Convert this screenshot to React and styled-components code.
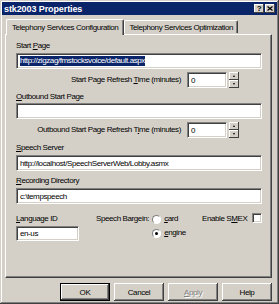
import React from 'react'
import styled, { createGlobalStyle } from 'styled-components'

const GlobalStyle = createGlobalStyle`
  html, body {
    margin: 0;
    padding: 0;
    background: #d4d0c8;
  }
  body {
    font-family: "Liberation Sans", Arial, sans-serif;
  }
`

export default function App() {
  return (
    <>
      <GlobalStyle />
      <Window>
        <TitleBar>
          <Title>stk2003 Properties</Title>
          <CaptionButtons>
            <CaptionButton>?</CaptionButton>
            <CaptionButton>
              <svg width="6" height="5" viewBox="0 0 6 5">
                <path d="M0.5 0.5 L5.5 4.5 M5.5 0.5 L0.5 4.5" stroke="#000" strokeWidth="1.2" />
              </svg>
            </CaptionButton>
          </CaptionButtons>
        </TitleBar>

        <Tabs>
          <Tab active>Telephony Services Configuration</Tab>
          <Tab>Telephony Services Optimization</Tab>
        </Tabs>

        <Panel>
          <Label>
            Start <U>P</U>age
          </Label>
          <Input>
            <Selected>http://zigzag/fmstocksvoice/default.aspx</Selected>
          </Input>

          <SpinRow>
            <Label>
              Start Page Refresh <U>T</U>ime (minutes)
            </Label>
            <SpinInput>0</SpinInput>
            <Spinner>
              <SpinHalf>
                <Arrow up />
              </SpinHalf>
              <SpinHalf>
                <Arrow />
              </SpinHalf>
            </Spinner>
          </SpinRow>

          <Label gap={4}>
            <U>O</U>utbound Start Page
          </Label>
          <Input gap={1} />

          <SpinRow>
            <Label>
              Outbound Start Page Refresh T<U>i</U>me (minutes)
            </Label>
            <SpinInput>0</SpinInput>
            <Spinner>
              <SpinHalf>
                <Arrow up />
              </SpinHalf>
              <SpinHalf>
                <Arrow />
              </SpinHalf>
            </Spinner>
          </SpinRow>

          <Label gap={5}>
            <U>S</U>peech Server
          </Label>
          <Input>http://localhost/SpeechServerWeb/Lobby.asmx</Input>

          <Label gap={5}>
            <U>R</U>ecording Directory
          </Label>
          <Input>c:\tempspeech</Input>

          <BottomRow>
            <Field>
              <Label>
                <U>L</U>anguage ID
              </Label>
              <ShortInput>en-us</ShortInput>
            </Field>
            <Bargein>
              <Label>Speech Bargein:</Label>
              <Radios>
                <RadioRow>
                  <Radio />
                  <Label>
                    <U>c</U>ard
                  </Label>
                </RadioRow>
                <RadioRow>
                  <Radio checked />
                  <Label>
                    <U>e</U>ngine
                  </Label>
                </RadioRow>
              </Radios>
            </Bargein>
            <Smex>
              <SmexLabel>
                Enable S<U>M</U>EX
              </SmexLabel>
              <Checkbox />
            </Smex>
          </BottomRow>
        </Panel>

        <Buttons>
          <Button primary>OK</Button>
          <Button>Cancel</Button>
          <Button disabled>
            <U>A</U>pply
          </Button>
          <Button>Help</Button>
        </Buttons>
      </Window>
    </>
  )
}

const Window = styled.div`
  box-sizing: border-box;
  width: 279px;
  height: 304px;
  padding: 2px;
  background: #d4d0c8;
  box-shadow: inset -1px -1px #404040, inset 1px 1px #d4d0c8, inset -2px -2px #808080,
    inset 2px 2px #ffffff;
  display: flex;
  flex-direction: column;
  font-size: 8px;
  letter-spacing: -0.4px;
  color: #000;
`

const TitleBar = styled.div`
  height: 13px;
  background: #0a246a;
  display: flex;
  align-items: center;
  justify-content: space-between;
  padding: 0 2px 0 2px;
`

const Title = styled.span`
  color: #fff;
  font-weight: bold;
  font-size: 9px;
  letter-spacing: -0.1px;
`

const CaptionButtons = styled.div`
  display: flex;
  gap: 1px;
`

const CaptionButton = styled.div`
  box-sizing: border-box;
  width: 10px;
  height: 9px;
  background: #d4d0c8;
  box-shadow: inset -1px -1px #404040, inset 1px 1px #ffffff;
  display: flex;
  align-items: center;
  justify-content: center;
  font-weight: bold;
  font-size: 8px;
  line-height: 1;
`

const Tabs = styled.div`
  display: flex;
  align-items: flex-end;
  height: 16px;
  margin: 3px 0 0 4px;
  position: relative;
  z-index: 1;
`

const Tab = styled.div`
  box-sizing: border-box;
  height: ${p => (p.active ? 16 : 13)}px;
  padding: 0 ${p => (p.active ? 5 : 4)}px;
  margin-bottom: ${p => (p.active ? -1 : 1)}px;
  background: #d4d0c8;
  border-top: 1px solid #fff;
  border-left: 1px solid #fff;
  border-right: 1px solid #404040;
  box-shadow: inset -1px 0 #808080;
  border-radius: 2px 2px 0 0;
  display: flex;
  align-items: center;
  white-space: nowrap;
`

const Panel = styled.div`
  box-sizing: border-box;
  height: 244px;
  margin: 0 5px 0 3px;
  padding: 6px 9px 0 10px;
  border-top: 1px solid #fff;
  border-left: 1px solid #fff;
  border-right: 1px solid #404040;
  border-bottom: 1px solid #404040;
  box-shadow: inset -1px -1px #808080;
  display: flex;
  flex-direction: column;
`

const Label = styled.div`
  margin-top: ${p => p.gap || 0}px;
  line-height: 10px;
  white-space: nowrap;
`

const U = styled.span`
  text-decoration: underline;
`

const sunken = `
  box-sizing: border-box;
  background: #fff;
  border: 1px solid;
  border-color: #808080 #fff #fff #808080;
  box-shadow: inset 1px 1px #404040, inset -1px -1px #d4d0c8;
  display: flex;
  align-items: center;
  white-space: nowrap;
  overflow: hidden;
`

const Input = styled.div`
  ${sunken}
  height: 16px;
  margin-top: ${p => p.gap ?? 2}px;
  padding-left: 3px;
`

const Selected = styled.span`
  background: #0a246a;
  color: #fff;
  line-height: 10px;
`

const SpinRow = styled.div`
  display: flex;
  align-items: center;
  justify-content: flex-end;
  margin-top: 3px;
  padding-right: 23px;
`

const SpinInput = styled.div`
  ${sunken}
  width: 40px;
  height: 16px;
  margin-left: 6px;
  padding-left: 3px;
`

const Spinner = styled.div`
  display: flex;
  flex-direction: column;
  margin-left: 2px;
`

const SpinHalf = styled.div`
  box-sizing: border-box;
  width: 10px;
  height: 8px;
  background: #d4d0c8;
  box-shadow: inset -1px -1px #404040, inset 1px 1px #fff;
  display: flex;
  align-items: center;
  justify-content: center;
`

const Arrow = styled.div`
  width: 0;
  height: 0;
  border-left: 1.5px solid transparent;
  border-right: 1.5px solid transparent;
  ${p => (p.up ? 'border-bottom: 2px solid #000;' : 'border-top: 2px solid #000;')}
`

const BottomRow = styled.div`
  display: flex;
  align-items: flex-start;
  margin-top: 10px;
`

const Field = styled.div`
  display: flex;
  flex-direction: column;
  gap: 2px;
`

const ShortInput = styled.div`
  ${sunken}
  width: 63px;
  height: 15px;
  padding-left: 3px;
`

const Bargein = styled.div`
  display: flex;
  width: 107px;
  margin-left: 17px;
`

const Radios = styled.div`
  display: flex;
  flex-direction: column;
  gap: 4px;
  margin-left: 3px;
`

const RadioRow = styled.div`
  display: flex;
  align-items: center;
  gap: 3px;
`

const Radio = styled.div`
  box-sizing: border-box;
  width: 9px;
  height: 9px;
  border-radius: 50%;
  background: #fff;
  border: 1px solid;
  border-color: #808080 #fff #fff #808080;
  display: flex;
  align-items: center;
  justify-content: center;
  &::after {
    content: '';
    width: 3px;
    height: 3px;
    border-radius: 50%;
    background: ${p => (p.checked ? '#000' : 'transparent')};
  }
`

const Smex = styled.div`
  display: flex;
  align-items: flex-start;
`

const SmexLabel = styled.div`
  width: 50px;
  line-height: 10px;
  white-space: nowrap;
`

const Checkbox = styled.div`
  ${sunken}
  width: 10px;
  height: 10px;
  margin-top: -1px;
`

const Buttons = styled.div`
  display: flex;
  justify-content: flex-end;
  gap: 4px;
  margin: 5px 5px 0 0;
`

const Button = styled.div`
  box-sizing: border-box;
  width: 50px;
  height: 18px;
  background: #d4d0c8;
  display: flex;
  align-items: center;
  justify-content: center;
  color: ${p => (p.disabled ? '#808080' : '#000')};
  text-shadow: ${p => (p.disabled ? '1px 1px #fff' : 'none')};
  border: ${p => (p.primary ? '1px solid #000' : 'none')};
  box-shadow: inset -1px -1px #404040, inset 1px 1px #fff, inset -2px -2px #808080;
`
